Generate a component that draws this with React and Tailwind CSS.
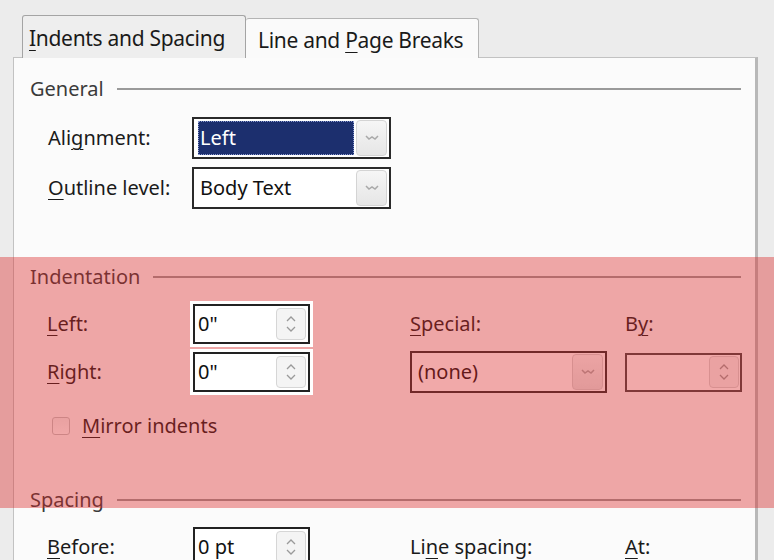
import React from 'react';

const U = ({ children }) => (
    <span className="underline decoration-1 underline-offset-[4px]">{children}</span>
);

function SectionHeader({ title, lineClass = 'ml-[13px]' }) {
    return (
        <div className="flex items-center h-[28px] pl-[16px] pr-[14px]">
            <span className="text-[#3a3a3a]">{title}</span>
            <div className={`flex-1 h-[2px] bg-[#9a9a9a] ${lineClass}`} />
        </div>
    );
}

function DropArrow() {
    return (
        <div className="w-[31px] h-[36px] rounded-[4px] border border-[#d4d4d4] bg-gradient-to-b from-[#f6f6f6] to-[#e6e6e6] flex items-center justify-center">
            <svg width="16" height="10" viewBox="0 0 16 10">
                <path d="M2 3 L5 6 L8 4 L11 6 L14 3" fill="none" stroke="#a9a9a9" strokeWidth="1.5" />
            </svg>
        </div>
    );
}

function Spinner() {
    return (
        <div className="w-[30px] h-[32px] rounded-[4px] border border-[#d6d6d6] bg-[#f4f4f4] flex flex-col items-center justify-center gap-[4px]">
            <svg width="14" height="7" viewBox="0 0 14 7">
                <path d="M3 6 L7 2 L11 6" fill="none" stroke="#9a9a9a" strokeWidth="1.3" />
            </svg>
            <svg width="14" height="7" viewBox="0 0 14 7">
                <path d="M3 1 L7 5 L11 1" fill="none" stroke="#9a9a9a" strokeWidth="1.3" />
            </svg>
        </div>
    );
}

function Select({ value, selected, width = 'w-[199px]' }) {
    return (
        <div className={`${width} h-[42px] border-2 border-[#2a2a2a] bg-white flex items-center p-[2px]`}>
            <div className="flex-1 h-full flex items-center pl-[2px]">
                {selected ? (
                    <div className="w-full h-full bg-[#1c2f6e] text-white flex items-center pl-[2px] outline-1 outline-dotted outline-[#8a9ad0] -outline-offset-1">
                        {value}
                    </div>
                ) : (
                    <span className="pl-[2px] text-[#111]">{value}</span>
                )}
            </div>
            <div className="ml-[2px]">
                <DropArrow />
            </div>
        </div>
    );
}

// the two indent fields sit above the red highlight, so they stay white
function SpinInput({ value, width = 'w-[117px]', lifted }) {
    return (
        <div className={`${width} h-[40px] border-2 border-[#222] bg-white flex items-center pl-[3px] pr-[2px] ${lifted ? 'relative z-10 shadow-[0_0_0_3px_#fff]' : ''}`}>
            <span className="flex-1 text-[#111]">{value}</span>
            <Spinner />
        </div>
    );
}

export default function App() {
    return (
        <div className="relative w-[774px] h-[560px] overflow-hidden bg-[#ececec] text-[20px] leading-none text-[#1a1a1a] font-['Noto_Sans','DejaVu_Sans',sans-serif]">
            {/* tabs */}
            <div className="flex items-end pl-[22px] pt-[15px] h-[58px] text-[21px]">
                <div className="w-[224px] h-[43px] border border-b-0 border-[#a4a4a4] rounded-t-[3px] bg-[#eeeeee] pl-[6px] pt-[12px] tracking-[-0.3px]">
                    <U>I</U>ndents and Spacing
                </div>
                <div className="w-[233px] h-[40px] border border-b-0 border-l-0 border-[#b4b4b4] rounded-t-[3px] bg-[#fafafa] pl-[12px] pt-[11px] tracking-[-0.3px]">
                    Line and <U>P</U>age Breaks
                </div>
            </div>

            {/* panel */}
            <div className="-mt-[1px] ml-[13px] w-[745px] h-[520px] border border-[#c2c2c2] border-r-[3px] border-r-[#b8b8b8] bg-[#fbfbfb]">
                <div className="mt-[17px]">
                    <SectionHeader title="General" />
                </div>

                <div className="mt-[14px] flex items-center h-[42px] pl-[34px]">
                    <span className="w-[144px]">Ali<U>g</U>nment:</span>
                    <Select value="Left" selected />
                </div>
                <div className="mt-[8px] flex items-center h-[42px] pl-[34px]">
                    <span className="w-[144px]"><U>O</U>utline level:</span>
                    <Select value="Body Text" />
                </div>

                <div className="mt-[54px]">
                    <SectionHeader title="Indentation" />
                </div>

                <div className="mt-[13px] grid grid-cols-[146px_217px_215px_auto] grid-rows-[40px_40px] gap-y-[8px] pl-[33px] items-center">
                    <span><U>L</U>eft:</span>
                    <SpinInput value={'0"'} lifted />
                    <span><U>S</U>pecial:</span>
                    <span>B<U>y</U>:</span>

                    <span><U>R</U>ight:</span>
                    <SpinInput value={'0"'} lifted />
                    <Select value="(none)" width="w-[197px]" />
                    <div className="w-[117px] h-[39px] border-2 border-[#444] bg-white flex items-center justify-end pr-[1px]">
                        <Spinner />
                    </div>
                </div>

                <div className="mt-[22px] flex items-center h-[24px] pl-[38px]">
                    <div className="w-[18px] h-[18px] rounded-[3px] border border-[#c4c4c4] bg-gradient-to-b from-[#f2f2f2] to-[#fdfdfd]" />
                    <span className="ml-[12px]"><U>M</U>irror indents</span>
                </div>

                <div className="mt-[48px]">
                    <SectionHeader title="Spacing" />
                </div>

                <div className="mt-[13px] grid grid-cols-[146px_217px_215px_auto] h-[40px] pl-[33px] items-center">
                    <span><U>B</U>efore:</span>
                    <SpinInput value="0 pt" />
                    <span>Li<U>n</U>e spacing:</span>
                    <span><U>A</U>t:</span>
                </div>
            </div>

            {/* red highlight over the indentation group */}
            <div className="absolute left-0 right-0 top-[257px] h-[251px] bg-[rgba(220,40,40,0.4)] pointer-events-none" />
        </div>
    );
}
